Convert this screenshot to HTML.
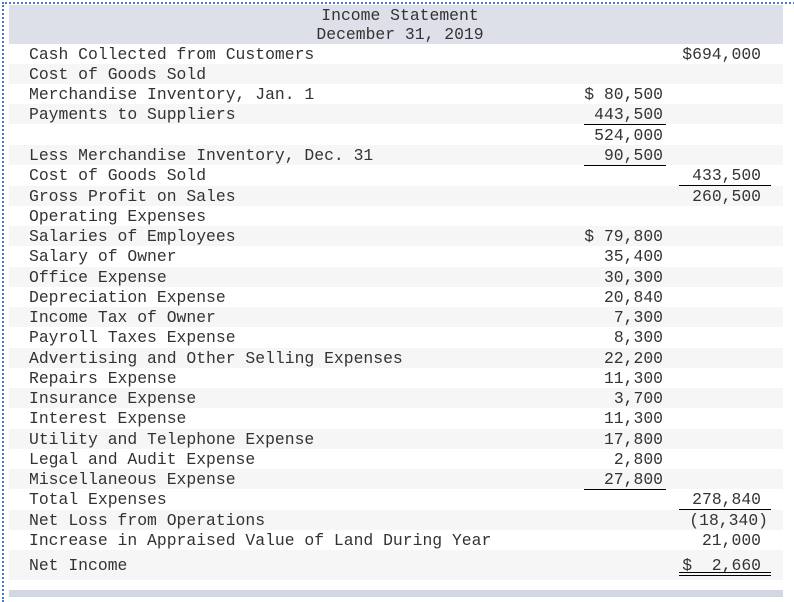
<!DOCTYPE html>
<html><head><meta charset="utf-8"><style>
*{margin:0;padding:0;box-sizing:border-box}
body{width:794px;height:597px;background:#fff;position:relative;overflow:hidden;font-family:"Liberation Mono",monospace;font-size:16.4px;color:#333}
.frame{position:absolute;left:2px;top:2px;width:800px;height:600px;border-top:2px dotted #4a7cc9;border-left:2px dotted #4a7cc9}
.hdr{position:absolute;left:9px;top:5px;width:774px;height:39px;background:#dde0e9;text-align:center;line-height:19px;padding-top:1px;padding-left:8px}
.r{position:absolute;left:9px;width:774px;height:20px;line-height:22px}
.g{background:#f6f6f6}
.l{position:absolute;left:20px;top:0;white-space:pre}
.m{position:absolute;right:120px;top:0;white-space:pre;text-align:right}
.x{position:absolute;right:22px;top:0;white-space:pre}
.um{position:absolute;left:575px;width:82px;height:1px;background:#000;bottom:-1px}
.ux{position:absolute;left:670px;width:92px;height:1px;background:#000;bottom:-1px}
.bot{position:absolute;left:9px;top:590px;width:774px;height:7px;background:#d2d7e1}
</style></head><body>
<div class="frame"></div>
<div class="hdr">Income Statement<br>December 31, 2019</div>
<div class="r" style="top:44px"><span class="l">Cash Collected from Customers</span><span class="x">$694,000</span></div>
<div class="r g" style="top:64px"><span class="l">Cost of Goods Sold</span></div>
<div class="r" style="top:84px"><span class="l">Merchandise Inventory, Jan. 1</span><span class="m">$ 80,500</span></div>
<div class="r g" style="top:104px"><span class="l">Payments to Suppliers</span><span class="m">443,500</span><div class="um"></div></div>
<div class="r" style="top:125px"><span class="m">524,000</span></div>
<div class="r g" style="top:145px"><span class="l">Less Merchandise Inventory, Dec. 31</span><span class="m">90,500</span><div class="um"></div></div>
<div class="r" style="top:165px"><span class="l">Cost of Goods Sold</span><span class="x">433,500</span><div class="ux"></div></div>
<div class="r g" style="top:186px"><span class="l">Gross Profit on Sales</span><span class="x">260,500</span></div>
<div class="r" style="top:206px"><span class="l">Operating Expenses</span></div>
<div class="r g" style="top:226px"><span class="l">Salaries of Employees</span><span class="m">$ 79,800</span></div>
<div class="r" style="top:246px"><span class="l">Salary of Owner</span><span class="m">35,400</span></div>
<div class="r g" style="top:267px"><span class="l">Office Expense</span><span class="m">30,300</span></div>
<div class="r" style="top:287px"><span class="l">Depreciation Expense</span><span class="m">20,840</span></div>
<div class="r g" style="top:307px"><span class="l">Income Tax of Owner</span><span class="m">7,300</span></div>
<div class="r" style="top:327px"><span class="l">Payroll Taxes Expense</span><span class="m">8,300</span></div>
<div class="r g" style="top:348px"><span class="l">Advertising and Other Selling Expenses</span><span class="m">22,200</span></div>
<div class="r" style="top:368px"><span class="l">Repairs Expense</span><span class="m">11,300</span></div>
<div class="r g" style="top:388px"><span class="l">Insurance Expense</span><span class="m">3,700</span></div>
<div class="r" style="top:408px"><span class="l">Interest Expense</span><span class="m">11,300</span></div>
<div class="r g" style="top:429px"><span class="l">Utility and Telephone Expense</span><span class="m">17,800</span></div>
<div class="r" style="top:449px"><span class="l">Legal and Audit Expense</span><span class="m">2,800</span></div>
<div class="r g" style="top:469px"><span class="l">Miscellaneous Expense</span><span class="m">27,800</span><div class="um"></div></div>
<div class="r" style="top:489px"><span class="l">Total Expenses</span><span class="x">278,840</span><div class="ux"></div></div>
<div class="r g" style="top:510px"><span class="l">Net Loss from Operations</span><span class="x" style="right:15px">(18,340)</span></div>
<div class="r" style="top:530px"><span class="l">Increase in Appraised Value of Land During Year</span><span class="x">21,000</span><div class="ux"></div></div>
<div class="r g" style="top:550px;height:30px;line-height:32px"><span class="l">Net Income</span><span class="x">$  2,660</span><div class="ux" style="bottom:4px;height:4px;border-top:1px solid #000;border-bottom:1px solid #000;background:transparent"></div></div>
<div class="bot"></div>
</body></html>
